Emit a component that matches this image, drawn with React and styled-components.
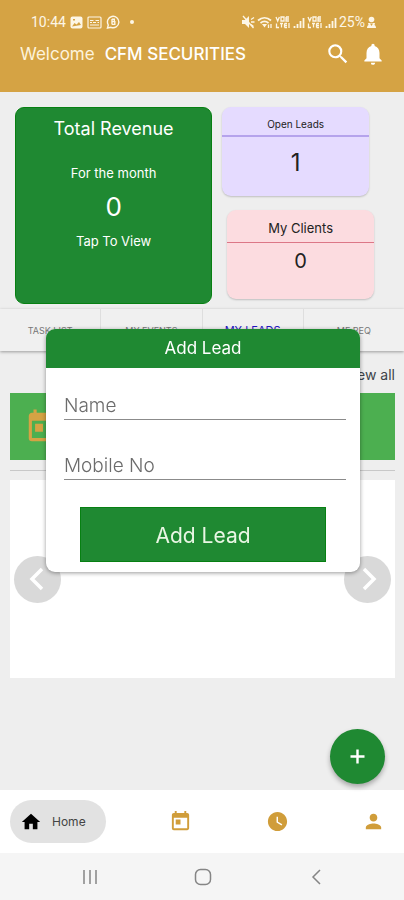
import React, {useState} from 'react';
import styled, {createGlobalStyle} from 'styled-components';
import {
  MdHome,
  MdNotifications,
  MdPerson,
  MdSearch,
  MdToday,
  MdWatchLater,
} from 'react-icons/md';

const GlobalStyle = createGlobalStyle`
  * {
    box-sizing: border-box;
  }
  body {
    margin: 0;
    background: #eeeeee;
    font-family: "Inter", "Open Sans", sans-serif;
  }
  button, input {
    font-family: inherit;
  }
  svg {
    display: block;
    flex: none;
  }
`;

const Screen = styled.div`
  display: flex;
  flex-direction: column;
  min-height: 100vh;
`;

const Header = styled.header`
  height: 92px;
  padding-top: 12px;
  background: #d5a344;
  color: #fff;
`;

const StatusBar = styled.div`
  display: flex;
  justify-content: space-between;
  align-items: center;
  height: 20px;
  padding: 0 28px 0 31px;
  font-family: Roboto, sans-serif;
  font-size: 14px;
  color: #fdf6e6;
`;

const StatusGroup = styled.div`
  display: flex;
  align-items: center;
  gap: ${({$gap}) => $gap || 2}px;
`;

const Dot = styled.span`
  width: 4px;
  height: 4px;
  margin-left: 5px;
  border-radius: 50%;
  background: currentColor;
`;

const TitleBar = styled.div`
  display: flex;
  align-items: center;
  justify-content: space-between;
  height: 44px;
  padding: 0 18px 0 20px;
`;

const Title = styled.h1`
  display: flex;
  gap: 10px;
  margin: 0;
  font-size: 17px;
  font-weight: 400;
  color: #fdf3dc;
  white-space: nowrap;
  strong {
    font-weight: 500;
    color: #fff;
  }
`;

const Actions = styled.div`
  display: flex;
  align-items: center;
  gap: 9px;
`;

const IconButton = styled.button`
  display: flex;
  padding: 0;
  border: 0;
  background: none;
  color: inherit;
`;

const Main = styled.main`
  position: relative;
  flex: 1;
`;

const Summary = styled.section`
  display: flex;
  gap: 10px;
  padding: 15px 30px 5px 15px;
`;

const RevenueCard = styled.button`
  display: flex;
  flex-direction: column;
  align-items: center;
  flex: 9;
  height: 197px;
  padding: 9px 0 0;
  border: 1px solid #078012;
  border-radius: 9px;
  background: #1f8932;
  color: #fff;
  font-size: 13px;
  line-height: 24px;
`;

const RevenueTitle = styled.span`
  margin-bottom: 20px;
  font-size: 18px;
`;

const RevenueValue = styled.span`
  font-size: 26px;
  line-height: 44px;
`;

const StatColumn = styled.div`
  display: flex;
  flex-direction: column;
  gap: 14px;
  flex: 7;
`;

const StatCard = styled.div`
  height: 89px;
  margin-left: ${({$shifted}) => $shifted ? '5px' : 0};
  margin-right: ${({$shifted}) => $shifted ? 0 : '5px'};
  border-radius: 9px;
  background: ${({$bg}) => $bg};
  box-shadow: 0 1px 2px rgba(0, 0, 0, 0.2);
  color: #222;
  text-align: center;
`;

const StatLabel = styled.div`
  height: ${({$big}) => $big ? 33 : 30}px;
  padding-top: ${({$big}) => $big ? 6 : 5}px;
  border-bottom: ${({$big}) => $big ? 1 : 2}px solid ${({$line}) => $line};
  font-size: ${({$big}) => $big ? 13 : 10}px;
  line-height: 24px;
`;

const StatValue = styled.div`
  font-size: ${({$big}) => $big ? 20 : 24}px;
  line-height: ${({$big}) => $big ? 36 : 52}px;
`;

const Tabs = styled.nav`
  display: flex;
  height: 42px;
  background: #f0f0f0;
  box-shadow: 0 1px 3px rgba(0, 0, 0, 0.35);
`;

const Tab = styled.button`
  flex: 1;
  padding: 0;
  border: 0;
  border-right: 1px solid #dedede;
  background: none;
  font-size: ${({$active}) => $active ? 11 : 9}px;
  color: ${({$active}) => $active ? '#2415c4' : '#777'};
  &:last-child {
    border-right: 0;
  }
`;

const ViewAll = styled.a`
  display: block;
  padding: 12px 9px 6px;
  color: #3d444a;
  font-size: 14px;
  line-height: 24px;
  text-align: right;
  text-decoration: none;
`;

const TaskCard = styled.div`
  display: flex;
  align-items: center;
  height: 67px;
  margin: 0 9px 0 10px;
  padding-left: 14px;
  background: #4caf50;
  color: #d5a344;
`;

const Divider = styled.hr`
  height: 1px;
  margin: 10px 9px 9px 10px;
  border: 0;
  background: #c8c8c8;
`;

const Carousel = styled.div`
  display: flex;
  align-items: center;
  justify-content: space-between;
  height: 198px;
  margin: 0 9px 0 10px;
  padding: 0 4px;
  background: #fff;
`;

const ArrowButton = styled.button`
  display: flex;
  align-items: center;
  justify-content: center;
  width: 47px;
  height: 47px;
  padding: 0;
  border: 0;
  border-radius: 50%;
  background: #d9d9d9;
  color: #fff;
`;

const Fab = styled.button`
  position: absolute;
  right: 19px;
  bottom: 6px;
  display: flex;
  align-items: center;
  justify-content: center;
  width: 55px;
  height: 55px;
  padding: 0;
  border: 0;
  border-radius: 50%;
  background: #1f8932;
  box-shadow: 0 3px 5px rgba(0, 0, 0, 0.3);
  color: #fff;
`;

const BottomNav = styled.nav`
  display: flex;
  align-items: center;
  justify-content: space-between;
  height: 63px;
  padding: 0 9px 0 10px;
  background: #fff;
`;

const NavItem = styled.button`
  display: flex;
  align-items: center;
  justify-content: ${({$active}) => $active ? 'flex-start' : 'center'};
  gap: 10px;
  width: ${({$active}) => $active ? 96 : 43}px;
  height: 43px;
  padding: 0 10px;
  border: 0;
  border-radius: 22px;
  background: ${({$active}) => $active ? '#e2e2e2' : 'none'};
  color: ${({$active}) => $active ? '#000' : '#d09d3a'};
  font-size: 12px;
  span {
    color: #444;
  }
`;

const SystemBar = styled.div`
  display: flex;
  align-items: center;
  justify-content: space-between;
  height: 47px;
  padding: 0 77px 0 79px;
  background: #f5f5f5;
  color: #858585;
`;

const Overlay = styled.div`
  position: fixed;
  inset: 0;
  display: flex;
  align-items: center;
  justify-content: center;
  padding: 1px 44px 0 46px;
`;

const Dialog = styled.form`
  width: 100%;
  padding-bottom: 10px;
  border-radius: 9px;
  background: #fff;
  box-shadow: 0 1px 4px rgba(0, 0, 0, 0.4);
  overflow: hidden;
`;

const DialogTitle = styled.h2`
  margin: 0;
  background: #1f8932;
  color: #fff;
  font-size: 17px;
  font-weight: 400;
  line-height: 39px;
  text-align: center;
`;

const Fields = styled.div`
  display: flex;
  flex-direction: column;
  gap: 24px;
  padding: 16px 14px 27px 18px;
`;

const Field = styled.input`
  width: 100%;
  height: 36px;
  padding: 8px 0 0;
  border: 0;
  border-bottom: 1px solid #8b8b8b;
  border-radius: 0;
  outline: none;
  background: none;
  color: #333;
  font-size: 19px;
  font-weight: 300;
  &::placeholder {
    color: #6c6c6c;
    opacity: 1;
  }
`;

const SubmitButton = styled.button`
  display: block;
  width: calc(100% - 68px);
  height: 55px;
  margin: 0 34px;
  padding: 2px 0 0;
  border: 1px solid #078012;
  background: #1f8932;
  color: #e9f6e4;
  font-size: 21px;
`;

const MuteIcon = () => (
  <svg width="14" height="14" viewBox="0 0 14 14" fill="currentColor">
    <path d="M1 5h3l4-4v12L4 9H1z"/>
    <path d="M10 4.5l3-2M10 7h3.5M10 9.5l2.5 2M2 1l10.5 12" stroke="currentColor" strokeWidth="1.3"/>
  </svg>
);

const PictureIcon = () => (
  <svg width="13" height="13" viewBox="0 0 13 13">
    <rect x="0.5" y="0.5" width="12" height="12" rx="2" fill="currentColor"/>
    <path d="M2 10.5l2.5-3.5 2 1.5L9 6l2 3M3 3h2v1.5H3z" fill="#d5a344"/>
  </svg>
);

const CardIcon = () => (
  <svg width="15" height="13" viewBox="0 0 15 13" fill="none" stroke="currentColor" strokeWidth="1.2">
    <rect x="1" y="1" width="13" height="11" rx="1"/>
    <path d="M3 4.5h3.5M8.5 4.5H12M3 6.5h2M6 6.5h3M10.5 6.5H12M3 9h9"/>
  </svg>
);

const WhatsappIcon = () => (
  <svg width="15" height="14" viewBox="0 0 15 14" fill="none" stroke="currentColor" strokeWidth="1.4">
    <path d="M1.5 13l.8-3A5.7 5.7 0 1 1 5 12.3z"/>
    <path d="M6 4v5.5M6 4.2h2.3v2.4H6.2h2.6v2.8H6"/>
  </svg>
);

const WifiIcon = () => (
  <svg width="16" height="13" viewBox="0 0 16 13" fill="none" stroke="currentColor" strokeWidth="1.8">
    <path d="M1 4.5c4-3.5 9-3.5 13 0M3.5 7c2.5-2 5.5-2 8 0"/>
    <path d="M5 8h5l-2.5 3.5z" fill="currentColor" stroke="none"/>
    <path d="M11.5 12V8.5M14 8v4" strokeWidth="1.3"/>
  </svg>
);

const LteIcon = () => (
  <svg width="16" height="13" viewBox="0 0 16 13" fill="none" stroke="currentColor" strokeWidth="1.3">
    <path d="M1 1l1.7 4L4.4 1M6 1h3v4H6zM11 1v4h3M11 3h3M11 1h3"/>
    <path d="M1.5 7.5v4H4M5 7.5h3M6.5 7.5v4M9.5 7.5H12M9.5 9.5H12M9.5 11.5H12M9.5 7.5v4M14 7v5"/>
  </svg>
);

const SignalIcon = () => (
  <svg width="12" height="13" viewBox="0 0 12 13" stroke="currentColor" strokeWidth="1.8">
    <path d="M1.5 12v-2M4.5 12V8M7.5 12V5M10.5 12V2"/>
  </svg>
);

const BatteryIcon = () => (
  <svg width="9" height="13" viewBox="0 0 9 13" fill="currentColor">
    <circle cx="4.5" cy="3.5" r="2.8"/>
    <path d="M0 12c0-1.5.5-2.5 1.5-3L1 7h7l-.5 2c1 .5 1.500 1.500 1.500 3z"/>
    <path d="M3 7.5h3L4.5 10z" fill="#d5a344"/>
  </svg>
);

const ArrowIcon = ({next}) => (
  <svg width="24" height="26" viewBox="0 0 24 26" fill="none" stroke="currentColor" strokeWidth="3.5">
    <path d={next ? 'M8 3l10 10L8 23' : 'M16 3L6 13l10 10'}/>
  </svg>
);

const PlusIcon = () => (
  <svg width="15" height="15" viewBox="0 0 15 15" stroke="currentColor" strokeWidth="2.4">
    <path d="M7.5 0.5v14M0.5 7.5h14"/>
  </svg>
);

const RecentsIcon = () => (
  <svg width="22" height="18" viewBox="0 0 22 18" stroke="currentColor" strokeWidth="1.5">
    <path d="M5 2v14M11 2v14M17 2v14"/>
  </svg>
);

const HomeKeyIcon = () => (
  <svg width="18" height="18" viewBox="0 0 18 18" fill="none" stroke="currentColor" strokeWidth="1.5">
    <rect x="1.5" y="1.5" width="15" height="15" rx="5"/>
  </svg>
);

const BackIcon = () => (
  <svg width="22" height="18" viewBox="0 0 22 18" fill="none" stroke="currentColor" strokeWidth="1.5">
    <path d="M15 2L8 9l7 7"/>
  </svg>
);

const tabs = ['TASK LIST', 'MY EVENTS', 'MY LEADS', 'MF REQ'];

const AddLeadDialog = () => {
  const [name, setName] = useState('');
  const [mobile, setMobile] = useState('');

  return <Overlay>
    <Dialog onSubmit={event => event.preventDefault()}>
      <DialogTitle>Add Lead</DialogTitle>
      <Fields>
        <Field
          aria-label="Name"
          placeholder="Name"
          value={name}
          onChange={({target}) => setName(target.value)}
        />
        <Field
          type="tel"
          aria-label="Mobile No"
          placeholder="Mobile No"
          value={mobile}
          onChange={({target}) => setMobile(target.value)}
        />
      </Fields>
      <SubmitButton type="submit">Add Lead</SubmitButton>
    </Dialog>
  </Overlay>;
};

const App = () => {
  const [activeTab, setActiveTab] = useState('MY LEADS');

  return <Screen>
    <GlobalStyle/>
    <Header>
      <StatusBar>
        <StatusGroup $gap={4}>
          <span>10:44</span>
          <PictureIcon/>
          <CardIcon/>
          <WhatsappIcon/>
          <Dot/>
        </StatusGroup>
        <StatusGroup>
          <MuteIcon/>
          <WifiIcon/>
          <LteIcon/>
          <SignalIcon/>
          <LteIcon/>
          <SignalIcon/>
          <span>25%</span>
          <BatteryIcon/>
        </StatusGroup>
      </StatusBar>
      <TitleBar>
        <Title><span>Welcome</span> <strong>CFM SECURITIES</strong></Title>
        <Actions>
          <IconButton aria-label="Search"><MdSearch size={26}/></IconButton>
          <IconButton aria-label="Notifications"><MdNotifications size={26}/></IconButton>
        </Actions>
      </TitleBar>
    </Header>
    <Main>
      <Summary>
        <RevenueCard>
          <RevenueTitle>Total Revenue</RevenueTitle>
          <span>For the month</span>
          <RevenueValue>0</RevenueValue>
          <span>Tap To View</span>
        </RevenueCard>
        <StatColumn>
          <StatCard $bg="#e5dbff">
            <StatLabel $line="#b5a3ec">Open Leads</StatLabel>
            <StatValue>1</StatValue>
          </StatCard>
          <StatCard $bg="#fcdce0" $shifted>
            <StatLabel $line="#dc7787" $big>My Clients</StatLabel>
            <StatValue $big>0</StatValue>
          </StatCard>
        </StatColumn>
      </Summary>
      <Tabs>
        {tabs.map(tab => (
          <Tab
            key={tab}
            $active={tab === activeTab}
            onClick={() => setActiveTab(tab)}>{tab}</Tab>
        ))}
      </Tabs>
      <ViewAll href="#leads">View all</ViewAll>
      <TaskCard><MdToday size={38}/></TaskCard>
      <Divider/>
      <Carousel>
        <ArrowButton aria-label="Previous"><ArrowIcon/></ArrowButton>
        <ArrowButton aria-label="Next"><ArrowIcon next/></ArrowButton>
      </Carousel>
      <Fab aria-label="Add"><PlusIcon/></Fab>
    </Main>
    <BottomNav>
      <NavItem $active><MdHome size={22}/><span>Home</span></NavItem>
      <NavItem aria-label="Calendar"><MdToday size={23}/></NavItem>
      <NavItem aria-label="History"><MdWatchLater size={23}/></NavItem>
      <NavItem aria-label="Profile"><MdPerson size={23}/></NavItem>
    </BottomNav>
    <SystemBar>
      <RecentsIcon/>
      <HomeKeyIcon/>
      <BackIcon/>
    </SystemBar>
    <AddLeadDialog/>
  </Screen>;
};

export default App;
